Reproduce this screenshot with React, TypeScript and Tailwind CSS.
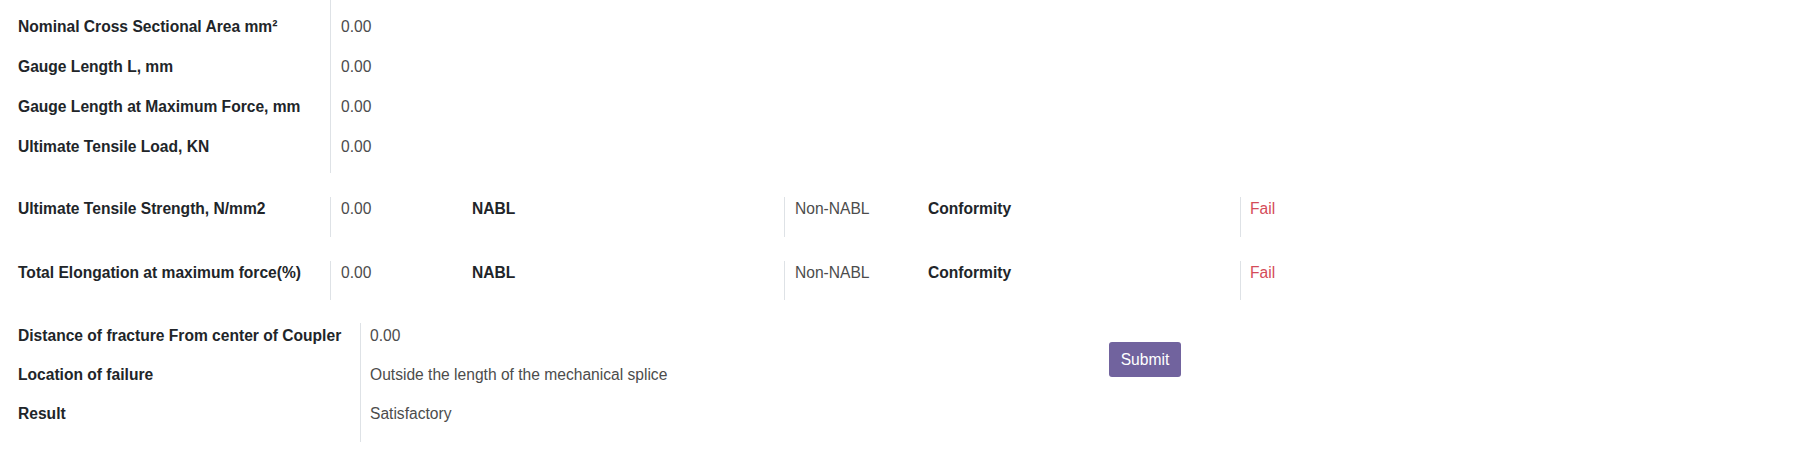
import React from "react";

const Label = ({ children }: { children: React.ReactNode }) => (
  <div className="font-bold text-[#212529] whitespace-nowrap">{children}</div>
);

const Value = ({ children, className = "" }: { children: React.ReactNode; className?: string }) => (
  <div className={"text-[#4c4c4c] whitespace-nowrap " + className}>{children}</div>
);

function TripleRow({ label, value }: { label: string; value: string }) {
  return (
    <div className="flex h-[39.5px]">
      <div className="w-[331px] pl-[18px] border-r border-[#dee2e6]">
        <Label>{label}</Label>
      </div>
      <div className="w-[141px] pl-[10px]">
        <Value>{value}</Value>
      </div>
      <div className="w-[313px] border-r border-[#dee2e6]">
        <Label>NABL</Label>
      </div>
      <div className="w-[143px] pl-[10px]">
        <Value>Non-NABL</Value>
      </div>
      <div className="w-[313px] border-r border-[#dee2e6]">
        <Label>Conformity</Label>
      </div>
      <div className="pl-[9px]">
        <Value className="!text-[#d44c59]">Fail</Value>
      </div>
    </div>
  );
}

export default function App() {
  const s1 = [
    ["Nominal Cross Sectional Area mm²", "0.00"],
    ["Gauge Length L, mm", "0.00"],
    ["Gauge Length at Maximum Force, mm", "0.00"],
    ["Ultimate Tensile Load, KN", "0.00"],
  ];
  const s3 = [
    ["Distance of fracture From center of Coupler", "0.00"],
    ["Location of failure", "Outside the length of the mechanical splice"],
    ["Result", "Satisfactory"],
  ];
  return (
    <div
      className="w-[1798px] h-[466px] bg-white text-[15.6px] leading-[23.4px] overflow-hidden"
      style={{ fontFamily: '"Liberation Sans", Arial, sans-serif' }}
    >
      {/* Section 1 */}
      <div className="flex h-[173px]">
        <div className="w-[331px] pl-[18px] pt-[15px] border-r border-[#dee2e6] flex flex-col gap-[16.6px]">
          {s1.map(([l]) => (
            <Label key={l}>{l}</Label>
          ))}
        </div>
        <div className="pl-[10px] pt-[15px] flex flex-col gap-[16.6px]">
          {s1.map(([l, v]) => (
            <Value key={l}>{v}</Value>
          ))}
        </div>
      </div>

      {/* Section 2 */}
      <div className="mt-[24px] flex flex-col gap-[24px]">
        <TripleRow label="Ultimate Tensile Strength, N/mm2" value="0.00" />
        <TripleRow label="Total Elongation at maximum force(%)" value="0.00" />
      </div>

      {/* Section 3 */}
      <div className="mt-[23px] flex">
        <div className="w-[361px] h-[119px] pl-[18px] pt-[1px] border-r border-[#dee2e6] flex flex-col gap-[15.6px]">
          {s3.map(([l]) => (
            <Label key={l}>{l}</Label>
          ))}
        </div>
        <div className="w-[748px] pl-[9px] pt-[1px] flex flex-col gap-[15.6px]">
          {s3.map(([l, v]) => (
            <Value key={l}>{v}</Value>
          ))}
        </div>
        <div className="pt-[19px]">
          <button className="w-[72px] h-[35px] rounded-[3px] bg-[#71639e] text-white flex items-center justify-center">
            Submit
          </button>
        </div>
      </div>
    </div>
  );
}
